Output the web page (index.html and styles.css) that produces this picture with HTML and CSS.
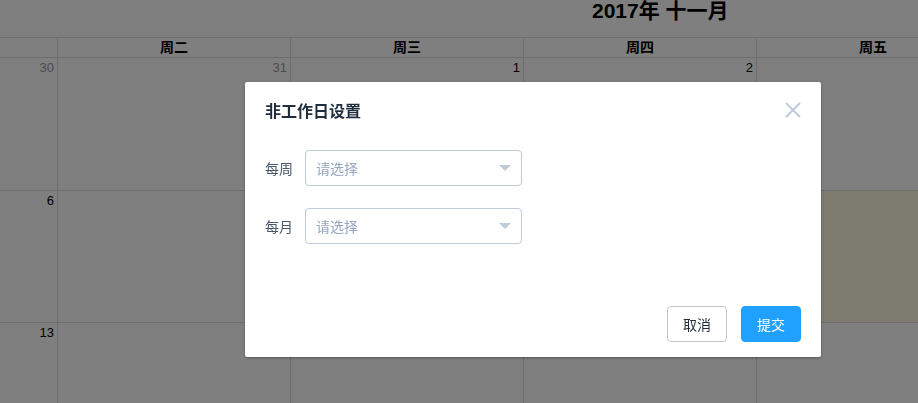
FILE: index.html
```html
<!DOCTYPE html>
<html lang="zh-CN">
<head>
  <meta charset="UTF-8" />
  <title>非工作日设置</title>
  <link rel="stylesheet" href="styles.css">
</head>
<body>
  <div class="calendar">
    <div class="toolbar"><h2>2017年 十一月</h2></div>
    <div class="cal-head">
      <div class="th"></div>
      <div class="th">周二</div>
      <div class="th">周三</div>
      <div class="th">周四</div>
      <div class="th">周五</div>
    </div>
    <div class="week">
      <div class="day other">30</div>
      <div class="day other">31</div>
      <div class="day">1</div>
      <div class="day">2</div>
      <div class="day"></div>
    </div>
    <div class="week mid">
      <div class="day">6</div>
      <div class="day"></div>
      <div class="day"></div>
      <div class="day"></div>
      <div class="day today"></div>
    </div>
    <div class="week">
      <div class="day">13</div>
      <div class="day"></div>
      <div class="day"></div>
      <div class="day"></div>
      <div class="day"></div>
    </div>
  </div>

  <div class="mask"></div>

  <div class="dialog">
    <div class="dialog-header">
      <span class="dialog-title">非工作日设置</span>
      <button class="dialog-close" aria-label="关闭">
        <svg width="16" height="16" viewBox="0 0 16 16">
          <path d="M1 1 L15 15 M15 1 L1 15" stroke="#bfcbd9" stroke-width="2" fill="none"/>
        </svg>
      </button>
    </div>
    <div class="dialog-body">
      <div class="form-item">
        <label class="form-label">每周</label>
        <div class="select">
          <span class="placeholder">请选择</span>
          <span class="caret"></span>
        </div>
      </div>
      <div class="form-item">
        <label class="form-label">每月</label>
        <div class="select">
          <span class="placeholder">请选择</span>
          <span class="caret"></span>
        </div>
      </div>
    </div>
    <div class="dialog-footer">
      <button class="btn">取消</button>
      <button class="btn btn-primary">提交</button>
    </div>
  </div>
</body>
</html>
```

FILE: styles.css
```css
body {
  margin: 0;
  font-family: "Liberation Sans", "Noto Sans CJK SC", sans-serif;
  font-size: 14px;
  color: #000;
  background: #fff;
  height: 100vh;
  overflow: hidden;
}

/* calendar under the mask */
.toolbar {
  height: 37px;
}

.toolbar h2 {
  margin: 0;
  padding-left: 592px;
  font-size: 21px;
  line-height: 22px;
  font-weight: bold;
  white-space: nowrap;
}

.cal-head, .week {
  display: grid;
  grid-template-columns: 58px 233px 233px 233px 233px;
}

.cal-head {
  border-top: 1px solid #ddd;
  border-bottom: 1px solid #ddd;
}

.th {
  height: 19px;
  line-height: 19px;
  text-align: center;
  font-weight: bold;
  border-right: 1px solid #ddd;
  white-space: nowrap;
}

.week {
  height: 132px;
  border-bottom: 1px solid #ddd;
}

.week.mid {
  height: 131px;
}

.day {
  border-right: 1px solid #ddd;
  text-align: right;
  padding: 2px 3px 0 0;
  font-size: 13px;
  box-sizing: border-box;
}

.day.other {
  color: #999;
}

.day.today {
  background: #fcf8e3;
}

/* mask + dialog */
.mask {
  position: fixed;
  top: 0;
  left: 0;
  right: 0;
  bottom: 0;
  background: rgba(0, 0, 0, 0.5);
}

.dialog {
  position: absolute;
  left: 245px;
  top: 82px;
  width: 576px;
  background: #fff;
  border-radius: 2px;
  box-shadow: 0 1px 3px rgba(0, 0, 0, 0.3);
  font-family: "Noto Sans CJK SC", "Liberation Sans", sans-serif;
}

.dialog-header {
  display: flex;
  justify-content: space-between;
  align-items: center;
  padding: 19px 20px 0;
}

.dialog-title {
  font-size: 16px;
  font-weight: bold;
  color: #1f2d3d;
  line-height: 18px;
}

.dialog-close {
  border: none;
  background: none;
  padding: 0;
  width: 16px;
  height: 16px;
  display: flex;
  cursor: pointer;
}

.dialog-body {
  padding: 31px 20px 30px;
}

.form-item {
  display: flex;
  align-items: center;
  margin-bottom: 22px;
}

.form-label {
  width: 40px;
  padding-right: 12px;
  box-sizing: border-box;
  font-size: 14px;
  color: #48576a;
  text-align: right;
  white-space: nowrap;
}

.select {
  width: 217px;
  height: 36px;
  box-sizing: border-box;
  border: 1px solid #bfcbd9;
  border-radius: 4px;
  display: flex;
  align-items: center;
  justify-content: space-between;
  padding: 0 10px;
}

.placeholder {
  font-size: 14px;
  color: #97a8be;
}

.caret {
  width: 0;
  height: 0;
  border-left: 6px solid transparent;
  border-right: 6px solid transparent;
  border-top: 6px solid #bfcbd9;
}

.dialog-footer {
  display: flex;
  justify-content: flex-end;
  gap: 14px;
  padding: 10px 20px 15px;
}

.btn {
  font-family: "Noto Sans CJK SC", "Liberation Sans", sans-serif;
  font-size: 14px;
  line-height: 1;
  height: 36px;
  padding: 0 15px;
  border: 1px solid #c4c4c4;
  border-radius: 4px;
  background: #fff;
  color: #1f2d3d;
  cursor: pointer;
}

.btn-primary {
  background: #20a0ff;
  border-color: #20a0ff;
  color: #fff;
}
```
